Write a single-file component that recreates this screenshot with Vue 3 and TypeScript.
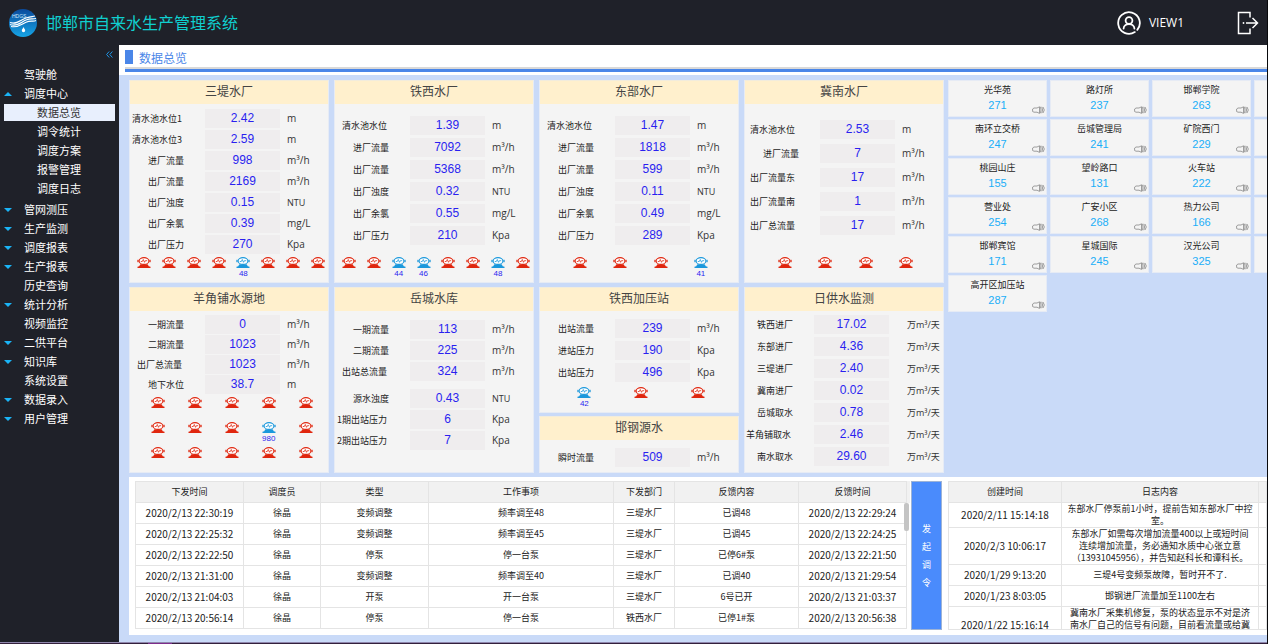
<script setup lang="ts">
import { ref } from 'vue'

interface NavItem {
  name: string
  arrow?: 'up' | 'down'
  children?: string[]
}
interface Reading {
  label: string
  value: string
  unit: string
  spaced?: boolean
}
interface Pump {
  on: boolean
  freq?: string
}
interface Station {
  title: string
  kind: string
  rows: Reading[]
  pumps?: Pump[]
  perRow?: string
}

const nav: NavItem[] = [
  { name: '驾驶舱' },
  { name: '调度中心', arrow: 'up', children: ['数据总览', '调令统计', '调度方案', '报警管理', '调度日志'] },
  { name: '管网测压', arrow: 'down' },
  { name: '生产监测', arrow: 'down' },
  { name: '调度报表', arrow: 'down' },
  { name: '生产报表', arrow: 'down' },
  { name: '历史查询' },
  { name: '统计分析', arrow: 'down' },
  { name: '视频监控' },
  { name: '二供平台', arrow: 'down' },
  { name: '知识库', arrow: 'down' },
  { name: '系统设置' },
  { name: '数据录入', arrow: 'down' },
  { name: '用户管理', arrow: 'down' },
]
const active = ref('数据总览')

const r = (label: string, value: string, unit: string, spaced = false): Reading => ({ label, value, unit, spaced })

/* Builds a pump list; the map holds the running pumps and their readings. */
function pumps(count: number, running: Record<number, string> = {}): Pump[] {
  return Array.from({ length: count }, (_, i) => ({ on: i in running, freq: running[i] }))
}

const columns: Station[][] = [
  [
    {
      title: '三堤水厂', kind: 'seven', perRow: 'eight',
      rows: [
        r('清水池水位1', '2.42', 'm'), r('清水池水位3', '2.59', 'm'), r('进厂流量', '998', 'm³/h'),
        r('出厂流量', '2169', 'm³/h'), r('出厂浊度', '0.15', 'NTU'), r('出厂余氯', '0.39', 'mg/L'),
        r('出厂压力', '270', 'Kpa'),
      ],
      pumps: pumps(8, { 4: '48' }),
    },
  ],
  [
    {
      title: '铁西水厂', kind: 'six', perRow: 'eight',
      rows: [
        r('清水池水位', '1.39', 'm'), r('进厂流量', '7092', 'm³/h'), r('出厂流量', '5368', 'm³/h'),
        r('出厂浊度', '0.32', 'NTU'), r('出厂余氯', '0.55', 'mg/L'), r('出厂压力', '210', 'Kpa'),
      ],
      pumps: pumps(8, { 2: '44', 3: '46', 6: '48' }),
    },
  ],
  [
    {
      title: '东部水厂', kind: 'six', perRow: 'four',
      rows: [
        r('清水池水位', '1.47', 'm'), r('进厂流量', '1818', 'm³/h'), r('出厂流量', '599', 'm³/h'),
        r('出厂浊度', '0.11', 'NTU'), r('出厂余氯', '0.49', 'mg/L'), r('出厂压力', '289', 'Kpa'),
      ],
      pumps: pumps(4, { 3: '41' }),
    },
  ],
  [
    {
      title: '冀南水厂', kind: 'five', perRow: 'four',
      rows: [
        r('清水池水位', '2.53', 'm'), r('进厂流量', '7', 'm³/h'), r('出厂流量东', '17', 'm³/h'),
        r('出厂流量南', '1', 'm³/h'), r('出厂总流量', '17', 'm³/h'),
      ],
      pumps: pumps(4),
    },
  ],
  [
    {
      title: '羊角铺水源地', kind: 'dense', perRow: 'grid5',
      rows: [
        r('一期流量', '0', 'm³/h'), r('二期流量', '1023', 'm³/h'),
        r('出厂总流量', '1023', 'm³/h'), r('地下水位', '38.7', 'm'),
      ],
      pumps: pumps(15, { 8: '980' }),
    },
  ],
  [
    {
      title: '岳城水库', kind: 'reservoir',
      rows: [
        r('一期流量', '113', 'm³/h'), r('二期流量', '225', 'm³/h'), r('出站总流量', '324', 'm³/h'),
        r('源水浊度', '0.43', 'NTU', true), r('1期出站压力', '6', 'Kpa'), r('2期出站压力', '7', 'Kpa'),
      ],
    },
  ],
  [
    {
      title: '铁西加压站', kind: 'booster', perRow: 'three',
      rows: [r('出站流量', '239', 'm³/h'), r('进站压力', '190', 'Kpa'), r('出站压力', '496', 'Kpa')],
      pumps: pumps(3, { 0: '42' }),
    },
    { title: '邯钢源水', kind: 'booster', rows: [r('瞬时流量', '509', 'm³/h')] },
  ],
  [
    {
      title: '日供水监测', kind: 'daily',
      rows: [
        r('铁西进厂', '17.02', '万m³/天'), r('东部进厂', '4.36', '万m³/天'), r('三堤进厂', '2.40', '万m³/天'),
        r('冀南进厂', '0.02', '万m³/天'), r('岳城取水', '0.78', '万m³/天'), r('羊角铺取水', '2.46', '万m³/天'),
        r('南水取水', '29.60', '万m³/天'),
      ],
    },
  ],
]

const points: [string, string][][] = [
  [['光华苑', '271'], ['路灯所', '237'], ['邯郸学院', '263']],
  [['南环立交桥', '247'], ['岳城管理局', '241'], ['矿院西门', '229']],
  [['桃园山庄', '155'], ['望岭路口', '131'], ['火车站', '222']],
  [['营业处', '254'], ['广安小区', '268'], ['热力公司', '166']],
  [['邯郸宾馆', '171'], ['星城国际', '245'], ['汉光公司', '325']],
  [['高开区加压站', '287']],
]

const orderHeads = ['下发时间', '调度员', '类型', '工作事项', '下发部门', '反馈内容', '反馈时间']
const orders = [
  ['2020/2/13 22:30:19', '徐晶', '变频调整', '频率调至48', '三堤水厂', '已调48', '2020/2/13 22:29:24'],
  ['2020/2/13 22:25:32', '徐晶', '变频调整', '频率调至45', '三堤水厂', '已调45', '2020/2/13 22:24:25'],
  ['2020/2/13 22:22:50', '徐晶', '停泵', '停一台泵', '三堤水厂', '已停6#泵', '2020/2/13 22:21:50'],
  ['2020/2/13 21:31:00', '徐晶', '变频调整', '频率调至40', '三堤水厂', '已调40', '2020/2/13 21:29:54'],
  ['2020/2/13 21:04:03', '徐晶', '开泵', '开一台泵', '三堤水厂', '6号已开', '2020/2/13 21:03:37'],
  ['2020/2/13 20:56:14', '徐晶', '停泵', '停一台泵', '铁西水厂', '已停1#泵', '2020/2/13 20:56:38'],
]

const logs = [
  { time: '2020/2/11 15:14:18', text: ['东部水厂停泵前1小时，提前告知东部水厂中控', '室。'] },
  { time: '2020/2/3 10:06:17', text: ['东部水厂如需每次增加流量400以上或短时间', '连续增加流量，务必通知水质中心张立意', '（13931045956），并告知赵科长和谭科长。'] },
  { time: '2020/1/29 9:13:20', text: ['三堤4号变频泵故障，暂时开不了.'] },
  { time: '2020/1/23 8:03:05', text: ['邯钢进厂流量加至1100左右'] },
  { time: '2020/1/22 15:16:14', text: ['冀南水厂采集机修复，泵的状态显示不对是济', '南水厂自己的信号有问题，目前看流量或给冀'], tall: true },
]
</script>

<template>
  <div class="app">
    <header class="top">
      <svg class="logo" viewBox="0 0 28 28" aria-hidden="true">
        <defs>
          <linearGradient id="sky" x1="0" y1="0" x2="0" y2="1">
            <stop offset="0" stop-color="#0b4a9c" />
            <stop offset="1" stop-color="#16a5e6" />
          </linearGradient>
        </defs>
        <circle cx="14" cy="14" r="14" fill="url(#sky)" />
        <text x="3" y="9" font-size="5" fill="#cfe6fa" font-family="Liberation Sans, sans-serif">HDGS</text>
        <path d="M1 13.500C8 16 11 11 17 9S23 8 26 7M1 15.500C8 18 12 13 17 11S23 10.500 27 9.500M2 17.500C9 19 12 15.500 17 13.200S24 13 27 11.500" fill="none" stroke="#fff" stroke-width="1.200" />
        <path d="M14.500 18C15.300 19.800 16.200 20.500 16.200 21.600A1.700 1.700 0 0 1 12.800 21.600C12.800 20.500 13.700 19.800 14.500 18Z" fill="#fff" />
      </svg>
      <h1>邯郸市自来水生产管理系统</h1>
      <button class="user" type="button">
        <svg viewBox="0 0 24 24" width="24" height="24" aria-hidden="true">
          <g fill="none" stroke="#fff" stroke-width="1.800" stroke-linecap="round">
            <path d="M17.800 21.100A10.800 10.800 0 1 1 20.300 18.900" />
            <circle cx="12" cy="9.500" r="3.400" />
            <path d="M6.600 17.500C6.800 11.500 17.200 11.500 17.400 17.500" />
          </g>
        </svg>
        <span>VIEW1</span>
      </button>
      <button class="exit" type="button" aria-label="退出">
        <svg viewBox="0 0 22 24" width="22" height="24" aria-hidden="true">
          <path d="M13 6.500V1.500H1.500V22.500H13V17.500M9 12H20.500M15.500 7L20.500 12L15.500 17" fill="none" stroke="#fff" stroke-width="1.500" />
          <circle cx="6.500" cy="12" r="0.900" fill="#fff" />
        </svg>
      </button>
    </header>

    <div class="body">
      <nav class="side">
        <button class="fold" type="button" aria-label="收起菜单">
          <svg viewBox="0 0 7 7" width="7" height="7" aria-hidden="true">
            <path d="M3.200 0.500L0.600 3.500L3.200 6.500M6.400 0.500L3.800 3.500L6.400 6.500" fill="none" stroke="#1f95e6" stroke-width="1" />
          </svg>
        </button>
        <ul>
          <li v-for="n in nav" :key="n.name">
            <a href="#" class="item">
              <i v-if="n.arrow" class="arrow" :class="n.arrow"></i>{{ n.name }}
            </a>
            <ul v-if="n.children" class="sub">
              <li v-for="c in n.children" :key="c">
                <a href="#" class="child" :class="{ active: c === active }" @click.prevent="active = c">{{ c }}</a>
              </li>
            </ul>
          </li>
        </ul>
      </nav>

      <main>
        <div class="crumb"><h2>数据总览</h2></div>

        <div class="content">
          <div class="cards">
            <div v-for="(col, i) in columns" :key="i" class="stack">
              <section v-for="s in col" :key="s.title" class="card" :class="s.kind">
                <h3>{{ s.title }}</h3>
                <dl>
                  <div v-for="row in s.rows" :key="row.label" class="row" :class="{ spaced: row.spaced }">
                    <dt :class="{ long: row.label.length > 4 }">{{ row.label }}</dt>
                    <dd>{{ row.value }}</dd>
                    <dd class="unit" :class="{ caps: row.unit === 'NTU' }">{{ row.unit }}</dd>
                  </div>
                </dl>
                <div v-if="s.pumps" class="pumps" :class="s.perRow">
                  <div v-for="(p, k) in s.pumps" :key="k" class="pump" :class="{ on: p.on }">
                    <svg viewBox="0 0 14 11" width="14" height="11" aria-hidden="true">
                      <ellipse cx="7" cy="4" rx="4.900" ry="3.400" fill="#fff" stroke="currentColor" stroke-width="1.100" />
                      <path d="M0 4H2.100M11.900 4H14M1 2.700V5.300M13 2.700V5.300" stroke="currentColor" stroke-width="0.800" fill="none" />
                      <path d="M3.800 4.500H5.300L6.300 2.500L7.500 5.300L8.400 3.700H10.200" stroke="currentColor" stroke-width="0.800" fill="none" />
                      <path d="M3.400 7.200H10.600L11.800 9.200L13.500 9.700V11H0.500V9.700L2.200 9.200Z" fill="currentColor" />
                    </svg>
                    <span v-if="p.freq">{{ p.freq }}</span>
                  </div>
                </div>
              </section>
            </div>
          </div>

          <div class="points">
            <template v-for="(line, i) in points" :key="i">
              <div v-for="p in line" :key="p[0]" class="tile">
                <h4>{{ p[0] }}</h4>
                <p>{{ p[1] }}</p>
                <svg class="horn" viewBox="0 0 13 8" width="13" height="8" aria-hidden="true">
                  <path d="M7.500 0.800L5 2H2L0.600 3V5.500L2 6.200H5L7.500 7.400Z" fill="none" stroke="#888" stroke-width="0.800" />
                  <path d="M8.500 0.800Q9.500 4 8.500 7.200M9.800 0.800Q11.300 4 9.800 7.200M11 1Q13.600 4 11 7" fill="none" stroke="#888" stroke-width="0.800" />
                </svg>
              </div>
              <div v-if="line.length === 3" class="tile"></div>
            </template>
          </div>

          <section class="panel">
            <div class="orders">
              <div class="scroller">
                <table>
                  <colgroup>
                    <col class="w-time" /><col class="w-who" /><col class="w-time" /><col />
                    <col class="w-dept" /><col class="w-reply" /><col class="w-time" />
                  </colgroup>
                  <thead>
                    <tr><th v-for="h in orderHeads" :key="h" scope="col">{{ h }}</th></tr>
                  </thead>
                  <tbody>
                    <tr v-for="o in orders" :key="o[0]">
                      <td v-for="(c, k) in o" :key="k" :class="{ date: k === 0 || k === 6 }">{{ c }}</td>
                    </tr>
                  </tbody>
                </table>
                <div class="thumb"></div>
              </div>
              <button class="issue" type="button">
                <span v-for="c in '发起调令'" :key="c">{{ c }}</span>
              </button>
            </div>

            <div class="logs">
              <table>
                <colgroup><col class="w-log" /><col /><col class="w-end" /></colgroup>
                <thead>
                  <tr><th scope="col">创建时间</th><th scope="col">日志内容</th><td class="head"></td></tr>
                </thead>
                <tbody>
                  <tr v-for="l in logs" :key="l.time" :class="{ tall: l.tall }">
                    <td class="date">{{ l.time }}</td>
                    <td class="text"><div v-for="t in l.text" :key="t">{{ t }}</div></td>
                    <td></td>
                  </tr>
                </tbody>
              </table>
            </div>
          </section>
        </div>
      </main>
    </div>
    <footer class="taskbar"></footer>
  </div>
</template>

<style>
body {
  margin: 0;
  overflow: hidden;
}
</style>

<style scoped>
* {
  box-sizing: border-box;
}
h1, h2, h3, h4, p, dl, dd, ul {
  margin: 0;
  padding: 0;
  font-weight: 400;
}
ul {
  list-style: none;
}
button {
  border: 0;
  padding: 0;
  background: none;
  color: inherit;
  font: inherit;
  cursor: pointer;
}
svg {
  display: block;
}
a {
  color: inherit;
  text-decoration: none;
}
.app {
  display: flex;
  flex-direction: column;
  min-height: 100vh;
  background: #1f2129;
  border-right: 1px solid #08090c;
  font-family: "Noto Sans CJK SC", "Open Sans", sans-serif;
  font-size: 9px;
  color: #222;
}

/* header */
.top {
  display: flex;
  align-items: center;
  height: 45px;
  padding: 0 8px 0 9px;
  color: #fff;
}
.logo {
  width: 28px;
  height: 28px;
}
.top h1 {
  margin-left: 9px;
  padding-bottom: 2px;
  font-size: 16px;
  line-height: 24px;
  color: #10cfcf;
}
.user {
  display: flex;
  align-items: center;
  gap: 8px;
  margin-left: auto;
  font: 12px/20px "Open Sans", sans-serif;
}
.exit {
  margin-left: 53px;
}

.body {
  flex: 1;
  display: flex;
}

/* navigation */
.side {
  flex: 0 0 119px;
  display: flex;
  flex-direction: column;
  color: #fff;
  font-size: 11px;
  line-height: 19px;
}
.fold {
  align-self: flex-end;
  height: 20px;
  padding: 0 6px 2px 0;
}
.item {
  display: flex;
  align-items: center;
  position: relative;
  padding-left: 24px;
}
.arrow {
  position: absolute;
  left: 4px;
  border: 4px solid transparent;
}
.arrow.down {
  top: 8px;
  border-top-color: #1ab4f6;
}
.arrow.up {
  top: 4px;
  border-bottom-color: #1ab4f6;
}
.sub {
  padding-bottom: 2px;
}
.child {
  display: block;
  height: 17px;
  margin: 1px 4px;
  padding-left: 33px;
  line-height: 17px;
}
.sub li {
  display: flow-root;
}
.child.active {
  background: #e8effd;
  color: #333;
}

/* main area */
main {
  flex: 1;
  min-width: 0;
  background: #c9daf8;
}
.crumb {
  height: 30px;
  padding: 5px 0 0 6px;
  background: #fff;
}
.crumb h2 {
  height: 22px;
  padding-left: 5px;
  border-bottom: 3px solid #4a86e8;
  box-shadow: inset 0 -2px #d9d9d9;
  font-size: 12px;
  line-height: 15px;
  color: #4a86e8;
}
.crumb h2::before {
  content: "";
  float: left;
  width: 8px;
  height: 14px;
  margin: 0 6px 0 -5px;
  background: #4a86e8;
}
.content {
  display: grid;
  grid-template-columns: minmax(0, 815fr) minmax(0, 319fr);
  gap: 4px;
  padding: 5px 0 7px 10px;
}
.cards {
  display: grid;
  grid-template-columns: repeat(4, minmax(0, 1fr));
  grid-template-rows: minmax(203px, auto) minmax(186px, auto);
  gap: 4px 5px;
}
.stack {
  display: flex;
  flex-direction: column;
  gap: 3px;
}
.card {
  display: flex;
  flex-direction: column;
  flex: 1 0 auto;
  background: #f4f4f4;
  border: 1px solid #e6ebf5;
  border-top-color: #f2ecdc;
}
.card h3 {
  height: 23px;
  background: #fff0cd;
  font-size: 12px;
  line-height: 20px;
  text-align: center;
  color: #444;
}
.card dl {
  display: flex;
  flex-direction: column;
  padding-top: 5px;
  gap: 2px;
}
.row {
  display: flex;
  line-height: 19px;
  white-space: nowrap;
}
.row dt {
  display: flex;
  justify-content: flex-end;
  flex: 0 0 54px;
}
.row dt.long {
  padding-right: 2px;
}
.row dd {
  flex: 0 0 75px;
  height: 19px;
  margin-left: 21px;
  background: #efedee;
  font: 12px/19px "Liberation Sans", sans-serif;
  text-align: center;
  color: #2a1ff0;
}
.row dd.unit {
  flex: 1 0 auto;
  margin-left: 7px;
  background: none;
  font: 10px/19px "Open Sans", "Noto Sans CJK SC", sans-serif;
  text-align: left;
  color: #333;
}
.row dd.unit.caps {
  font-size: 9px;
}
.six dl {
  padding-top: 12px;
  gap: 3px;
}
.five dl {
  padding-top: 16px;
  gap: 5px;
}
.five dt.long {
  padding-right: 4px;
}
.dense dl {
  padding-top: 4px;
  gap: 1px;
}
.reservoir dl {
  padding-top: 9px;
}
.reservoir .spaced {
  margin-top: 6px;
}
.booster dl {
  padding-top: 8px;
  gap: 3px;
}
.daily dl {
  padding-top: 4px;
  gap: 3px;
}
.daily dt {
  flex-basis: 48px;
}
.daily dd.unit {
  margin-left: 18px;
  font-size: 9px;
}
.stack .card:nth-child(2) {
  flex: 0 0 57px;
}

/* pumps */
.pumps {
  display: grid;
  grid-auto-rows: 25px;
  margin-top: auto;
}
.eight {
  grid-template-columns: repeat(8, 14px);
  justify-content: space-between;
  padding: 0 3px 0 7px;
}
.four {
  grid-template-columns: repeat(4, 1fr);
  padding: 0 17px 0 20px;
}
.three {
  grid-template-columns: repeat(3, 1fr);
  padding: 0 12px 0 16px;
}
.grid5 {
  grid-template-columns: repeat(5, 1fr);
  padding: 0 4px 0 10px;
}
.pump {
  display: flex;
  flex-direction: column;
  align-items: center;
  color: #e0260e;
}
.pump.on {
  color: #1a98dc;
}
.pump span {
  font: 8px/11px "Liberation Sans", sans-serif;
  color: #2a1ff0;
}

/* pressure points */
.points {
  display: grid;
  grid-template-columns: repeat(4, 99px);
  grid-auto-rows: 37px;
  gap: 2px 3px;
  align-content: start;
  overflow: hidden;
}
.tile {
  position: relative;
  background: #f4f4f4;
  border: 1px solid #e6ebf5;
  text-align: center;
}
.tile h4 {
  padding-top: 1px;
  font-size: 9px;
  line-height: 16px;
}
.tile p {
  font: 11px/15px "Liberation Sans", sans-serif;
  color: #1aaef8;
}
.horn {
  position: absolute;
  right: 1px;
  bottom: 2px;
}

/* tables */
.panel {
  grid-column: 1 / -1;
  display: grid;
  grid-template-columns: minmax(0, 815fr) minmax(0, 319fr);
  gap: 4px;
  padding: 4px 0 5px;
  background: #fff;
}
.orders {
  display: flex;
  padding: 0 2px 0 6px;
}
.scroller {
  position: relative;
  flex: 1;
  margin-right: 1px;
  padding-right: 3px;
  background: linear-gradient(#f1f1f1, #f1f1f1) top / 100% 22px no-repeat;
}
.thumb {
  position: absolute;
  right: 1px;
  top: 22px;
  width: 5px;
  height: 28px;
  border-radius: 2px;
  background: #c4c4c4;
}
table {
  width: 100%;
  table-layout: fixed;
  border-collapse: collapse;
}
th, td {
  height: 21px;
  padding: 0;
  border: 1px solid #e4e4e4;
  font-size: 9px;
  font-weight: 400;
  line-height: 12px;
  text-align: center;
}
th, .head {
  background: #f1f1f1;
}
.date {
  font-size: 10px;
}
.w-time { width: 108px; }
.w-who { width: 77px; }
.w-dept { width: 61px; }
.w-reply { width: 124px; }
.w-log { width: 113px; }
.w-end { width: 8px; }
.issue {
  display: flex;
  flex-direction: column;
  align-items: center;
  justify-content: center;
  flex: 0 0 31px;
  background: #4a8bfc;
  border: 1px solid #9db3d6;
  line-height: 18px;
  color: #fff;
}
.logs {
  height: 149px;
  overflow: hidden;
  border-bottom: 1px solid #e4e4e4;
}
.text {
  white-space: nowrap;
}
.tall td {
  height: 36px;
}
.tall .text {
  vertical-align: top;
}

.taskbar {
  height: 2px;
  border-top: 1px solid #8f86ac;
  background: linear-gradient(90deg, #33203c 148px, #7d2c8c 148px, #7d2c8c 172px, #33203c 172px);
}
</style>
